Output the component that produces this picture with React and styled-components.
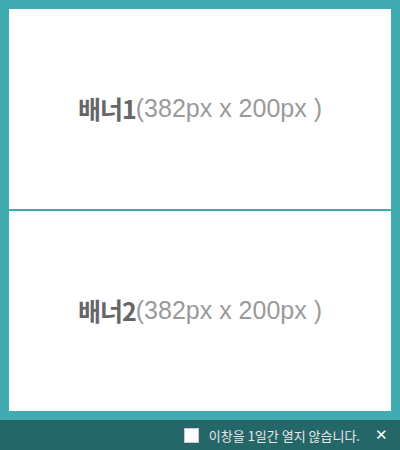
import React from 'react'
import styled, { createGlobalStyle } from 'styled-components'

const Global = createGlobalStyle`
  html, body { margin: 0; padding: 0; }
  body { font-family: "Liberation Sans", "Noto Sans CJK KR", sans-serif; }
`

function App() {
  return (
    <Popup>
      <Global />
      <Frame>
        <Banner>
          <Name>배너1</Name><Size>(382px x 200px )</Size>
        </Banner>
        <Banner>
          <Name>배너2</Name><Size>(382px x 200px )</Size>
        </Banner>
      </Frame>
      <Footer>
        <Check type="checkbox" />
        <Label>이창을 1일간 열지 않습니다.</Label>
        <Close>✕</Close>
      </Footer>
    </Popup>
  )
}

export default App

const Popup = styled.div`
  width: 400px;
  height: 450px;
  display: flex;
  flex-direction: column;
`

const Frame = styled.div`
  background: #40acb2;
  padding: 9px;
  display: flex;
  flex-direction: column;
  gap: 2px;
`

const Banner = styled.div`
  width: 382px;
  height: 200px;
  background: #fff;
  display: flex;
  align-items: center;
  justify-content: center;
  font-size: 25px;
  padding-bottom: 2px;
  box-sizing: border-box;
`

const Name = styled.span`
  font-family: "Noto Sans CJK KR", sans-serif;
  font-weight: bold;
  color: #666;
  letter-spacing: -1px;
`

const Size = styled.span`
  color: #9a9a9a;
`

const Footer = styled.div`
  flex: 1;
  background: #256669;
  display: flex;
  align-items: center;
  justify-content: flex-end;
  padding-right: 12px;
`

const Check = styled.input`
  appearance: none;
  width: 15px;
  height: 15px;
  margin: 0 10px 0 0;
  background: #fff;
  border: 1px solid #c8c8c8;
  box-sizing: border-box;
`

const Label = styled.span`
  font-family: "Noto Sans CJK KR", sans-serif;
  font-size: 13px;
  color: #e8e8e8;
`

const Close = styled.span`
  margin-left: 15px;
  color: #fff;
  font-size: 15px;
`
